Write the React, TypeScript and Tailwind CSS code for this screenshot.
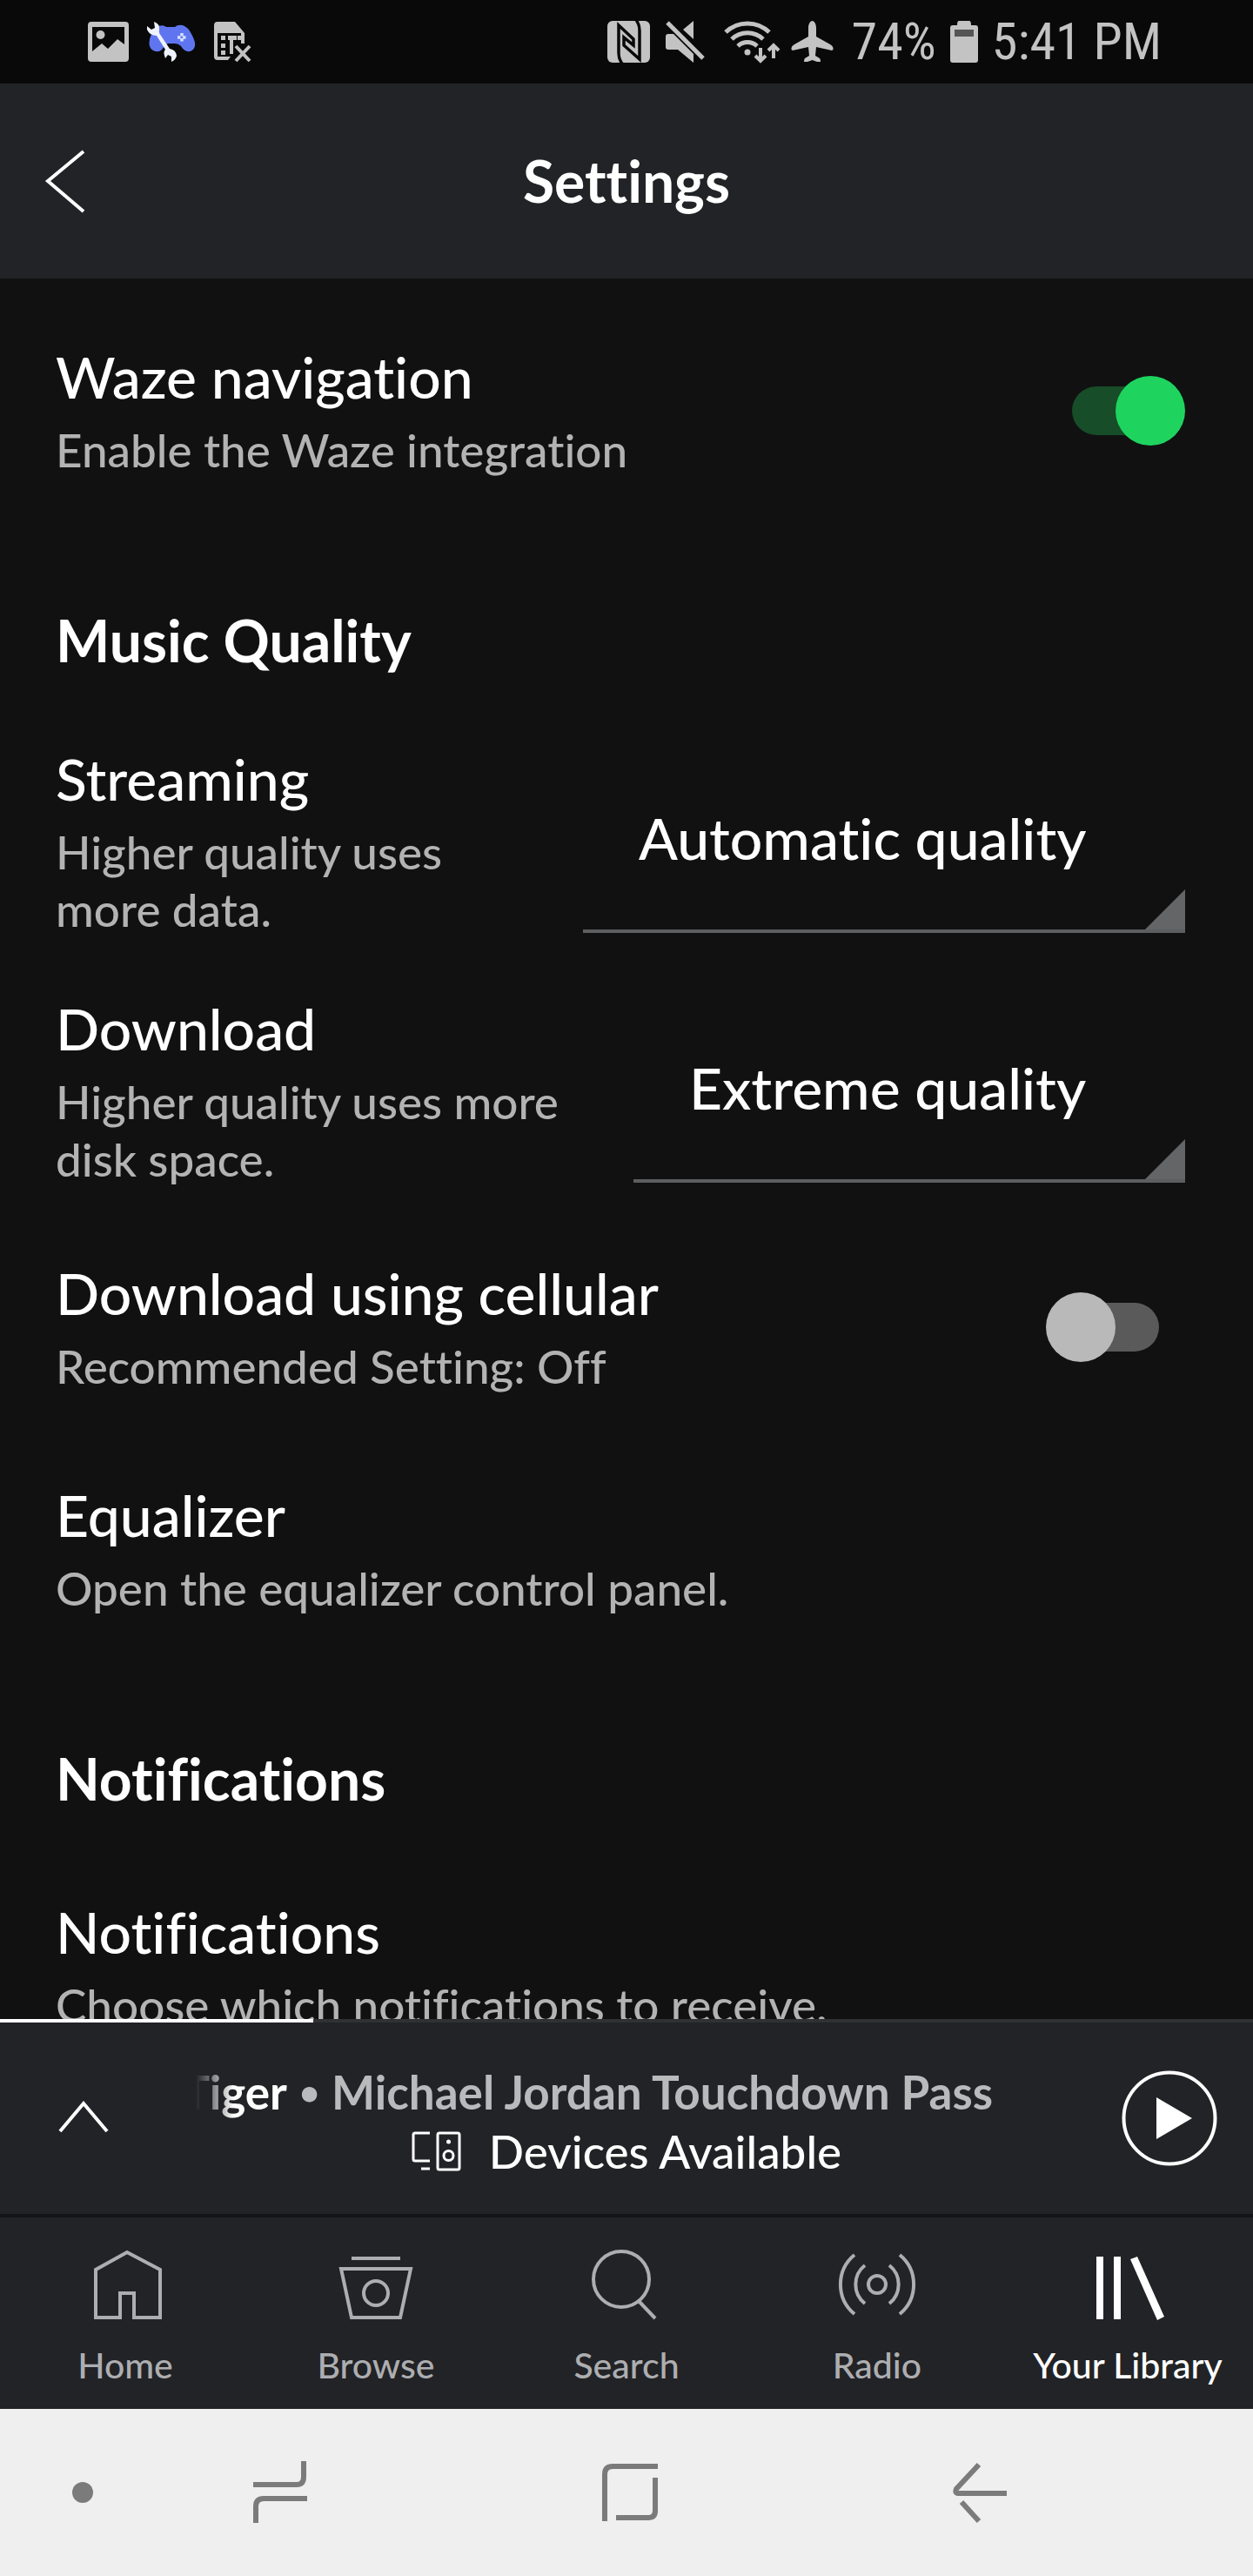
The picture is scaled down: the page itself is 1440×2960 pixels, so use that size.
import { ReactNode, useState } from 'react';

interface SettingTextProps { id: string; title: string; description: string; }

function SettingText({ id, title, description }: SettingTextProps) {
  return (
    <label htmlFor={id} className="flex min-w-0 flex-1 flex-col gap-[11px]">
      <span className="text-[66px] leading-[80px] text-white">{title}</span>
      <span className="text-[53px] leading-[66px] text-[#b3b3b3]">{description}</span>
    </label>
  );
}

function SectionTitle({ children }: { children: ReactNode }) {
  return <h2 className="pt-[97px] pb-[47px] text-[66px] leading-[80px] font-bold text-white">{children}</h2>;
}

function ToggleRow({ id, title, description, initial }: SettingTextProps & { initial: boolean }) {
  const [on, setOn] = useState(initial);
  return (
    <div className="flex items-center py-[49px]">
      <SettingText id={id} title={title} description={description} />
      <input
        id={id}
        type="checkbox"
        role="switch"
        checked={on}
        onChange={(e) => setOn(e.target.checked)}
        className="relative h-20 w-40 shrink-0 appearance-none before:absolute before:top-3 before:left-[30px] before:h-14 before:w-[100px] before:rounded-full before:bg-[#5a5a5a] after:absolute after:top-0 after:left-0 after:size-20 after:rounded-full after:bg-[#b9b9b9] checked:before:bg-[#174d28] checked:after:left-20 checked:after:bg-[#1ed45f]"
      />
    </div>
  );
}

function SelectRow({ id, title, description, options }: SettingTextProps & { options: string[] }) {
  return (
    <div className="flex items-center gap-12 py-8">
      <SettingText id={id} title={title} description={description} />
      <div className="relative shrink-0 border-b-4 border-[#5d5e60]">
        <select id={id} className="block h-[206px] appearance-none bg-transparent pr-[113px] pb-1 pl-16 text-[66px] text-white">
          {options.map((option) => <option key={option}>{option}</option>)}
        </select>
        <svg viewBox="0 0 46 46" className="pointer-events-none absolute right-0 bottom-0 size-[46px]" fill="#636567"><path d="M46 0V46H0Z" /></svg>
      </div>
    </div>
  );
}

function LinkRow({ title, description }: { title: string; description: string }) {
  return (
    <a href="#" className="flex flex-col gap-[11px] py-[49px]">
      <span className="text-[66px] leading-[80px] text-white">{title}</span>
      <span className="text-[53px] leading-[66px] text-[#b3b3b3]">{description}</span>
    </a>
  );
}

function StatusBar() {
  return (
    <div className="flex h-24 shrink-0 items-center justify-between bg-[#090909] pr-[105px] pl-[101px] font-['Roboto_Condensed',Roboto,sans-serif] text-[60px] leading-[72px] font-normal text-[#c3c3c3]">
      <div className="flex items-center gap-5">
        <svg viewBox="0 0 47 46" className="h-[46px] w-[47px]" fill="#c3c3c3">
          <path fillRule="evenodd" d="M4 0H43Q47 0 47 4V42Q47 46 43 46H4Q0 46 0 42V4Q0 0 4 0ZM5 6V34L16 25L23 31L34 20L42 26V6Z" />
          <circle cx="14.500" cy="15" r="5" />
        </svg>
        <svg viewBox="0 0 58 48" className="h-12 w-[58px]">
          <path d="M14 6Q20 4 23 7H33Q36 4 42 5Q48 7 52 15Q57 24 56 29Q54 36 47 35Q43 34 40 29Q37 26 33 26H25Q21 28 18 33Q14 37 8 34Q2 31 4 21Q7 10 14 6Z" fill="#5f75f0" />
          <path d="M41 14V24M36 19H46" stroke="#d5e0ff" strokeWidth="3.500" strokeDasharray="3.500 2.500" />
          <path d="M9 1Q16 3 15 11Q14 13 17 17L27 32Q34 33 35 40Q34 45 29 47L29 41L25 39L22 43Q19 35 22 33L12 17Q4 17 1 10V6L6 10L10 8Z" fill="#eef3ff" />
        </svg>
        <svg viewBox="0 0 44 48" className="h-12 w-11" fill="#c3c3c3">
          <path fillRule="evenodd" d="M4 1H24L35 14V26H31V14H4V41H19L16 45H4Q0 45 0 41V5Q0 1 4 1Z" />
          <path d="M8 17H13V22H8ZM16 17H26V22H22V38H18V22H16ZM27 17H31V22H27ZM8 26H13V31H8ZM8 34H13V39H8Z" />
          <path d="M25 29L41 46M41 29L25 46" stroke="#c3c3c3" strokeWidth="4" />
        </svg>
      </div>
      <div className="flex items-center gap-4">
        <svg viewBox="0 0 51 48" className="h-12 w-[51px]">
          <rect width="49" height="48" rx="6" fill="#c3c3c3" />
          <path d="M17 49Q13 44 13 37V5L30 21V28L19 19V28L37 44V11Q37 4 33 -1" fill="none" stroke="#090909" strokeWidth="3.500" />
        </svg>
        <svg viewBox="0 0 51 48" className="h-12 w-[51px]" fill="#c3c3c3">
          <path d="M20 10L32 0V21ZM3 15H9L32 38V48L14 33H3Q0 33 0 30V18Q0 15 3 15Z" />
          <path d="M2 2L43 43" stroke="#c3c3c3" strokeWidth="5" />
        </svg>
        <svg viewBox="0 0 61 48" className="h-12 w-[61px] overflow-visible" fill="none" stroke="#c3c3c3" strokeWidth="5">
          <path d="M2 13A36 36 0 0 1 52 13M9 21A26 26 0 0 1 45 21M16 29A16 16 0 0 1 38 29" />
          <circle cx="27" cy="36" r="3.500" fill="#c3c3c3" stroke="none" />
          <path d="M42 31V44M36 40L42 46L48 40M57 43V29M51 34L57 28L63 34" strokeWidth="4" />
        </svg>
        <svg viewBox="0 0 54 48" className="h-12 w-[54px]" fill="#c3c3c3">
          <path d="M24.500 0C27 0 29 4 29 8V18L45 27Q49 29 48.500 33L47 34L29 30L28 40L33 43Q34 44 34 47H30L24.500 45L19 47H15Q15 44 16 43L21 40L20 30L2 34L.5 33Q0 29 4 27L20 18V8C20 4 22 0 24.500 0Z" />
        </svg>
        <span>74%</span>
        <svg viewBox="0 0 32 48" className="h-12 w-8">
          <path d="M10 0H22Q24 0 24 5H29Q32 5 32 8V45Q32 48 29 48H3Q0 48 0 45V8Q0 5 3 5H8Q8 0 10 0Z" fill="#c3c3c3" />
          <path d="M5 10H27V18H5Z" fill="#555" />
        </svg>
        <span>5:41 PM</span>
      </div>
    </div>
  );
}

function NowPlaying() {
  return (
    <section className="shrink-0 border-b-4 border-[#131416] bg-[#222326]">
      <div className="h-1 bg-[#303133]"><div className="h-full w-1/4 bg-white" /></div>
      <div className="flex h-[220px] items-center">
        <button aria-label="Expand player" className="flex w-48 shrink-0 justify-center">
          <svg viewBox="0 0 60 40" className="h-10 w-[60px]" fill="none" stroke="#fff" strokeWidth="4"><path d="M3 35L30 3L57 35" /></svg>
        </button>
        <div className="min-w-0 flex-1 pt-2">
          <p className="mr-[107px] ml-[33px] flex justify-end gap-[14px] overflow-hidden text-[53px] leading-[68px] font-bold whitespace-nowrap text-[#b9babc] [mask-image:linear-gradient(to_right,transparent,black_44px)]">
            <span className="text-white">Tiger</span><span className="text-[40px]">•</span><span>Michael Jordan Touchdown Pass</span>
          </p>
          <button className="flex w-full items-center justify-center gap-8 text-[53px] leading-[68px] text-white">
            <svg viewBox="0 0 57 46" className="h-[46px] w-[57px]" fill="none" stroke="#fff" strokeWidth="3">
              <path d="M21 2H4Q2 2 2 4V32Q2 34 4 34H21M11 43H21" />
              <rect x="30" y="2" width="25" height="42" rx="2" />
              <circle cx="42.500" cy="28" r="5.500" />
              <circle cx="42.500" cy="12" r="2.500" fill="#fff" stroke="none" />
            </svg>
            Devices Available
          </button>
        </div>
        <button aria-label="Play" className="flex w-48 shrink-0 justify-center">
          <svg viewBox="0 0 110 110" className="size-[110px]"><circle cx="55" cy="55" r="52.500" fill="none" stroke="#fff" strokeWidth="4" /><path d="M40 31L81 55L40 79Z" fill="#fff" /></svg>
        </button>
      </div>
    </section>
  );
}

const tabs = [
  { label: 'Home', icon: <path d="M43 86H14V31L50 11L88 31V86H58V58H42V88" /> },
  { label: 'Browse', icon: <><path d="M20 18H76M8 30H88L76 86H20Z" /><circle cx="48" cy="58" r="14" /></> },
  { label: 'Search', icon: <><circle cx="42" cy="42" r="32" /><path d="M62 67L81 87" /></> },
  { label: 'Radio', icon: <><circle cx="48" cy="48" r="10" /><path d="M34 26A28 28 0 0 0 34 70M62 26A28 28 0 0 1 62 70M22 14A44 44 0 0 0 22 82M74 14A44 44 0 0 1 74 82" /></> },
  { label: 'Your Library', icon: <path d="M12 16H20V88H12ZM32 16H40V88H32ZM51 19L59 16L90 85L82 89Z" fill="#fff" stroke="none" />, active: true },
];

function TabBar() {
  return (
    <nav className="grid shrink-0 grid-cols-5 bg-[#222326] pt-[29px] pb-6">
      {tabs.map((tab) => (
        <a key={tab.label} href="#" className={tab.active ? 'flex flex-col items-center gap-[19px] text-white' : 'flex flex-col items-center gap-[19px] text-[#adaeb1]'}>
          <svg viewBox="0 0 96 96" className="size-24" fill="none" stroke="currentColor" strokeWidth="4">{tab.icon}</svg>
          <span className="text-[41px] leading-[52px] whitespace-nowrap">{tab.label}</span>
        </a>
      ))}
    </nav>
  );
}

function SystemBar() {
  return (
    <div className="grid h-48 shrink-0 grid-cols-[121fr_402fr_402fr_402fr_113fr] items-center justify-items-center bg-[#efefef] text-[#7b7b7b]">
      <button aria-label="Hide navigation bar" className="mr-[14px] size-6 justify-self-end rounded-full bg-[#7b7b7b]" />
      <button aria-label="Recent apps">
        <svg viewBox="0 0 62 72" className="h-[72px] w-[62px]" fill="none" stroke="currentColor" strokeWidth="6"><path d="M58 0V18Q58 27 50 27H0M62 43H12Q3 43 3 52V71" /></svg>
      </button>
      <button aria-label="Home screen">
        <svg viewBox="0 0 64 68" className="h-[68px] w-16" fill="none" stroke="currentColor" strokeWidth="6"><path d="M3 67V13Q3 4 12 4H64M61 17V55Q61 63 53 63H16" /></svg>
      </button>
      <button aria-label="Back">
        <svg viewBox="0 0 62 72" className="h-[72px] w-[62px]" fill="none" stroke="currentColor" strokeWidth="6"><path d="M30 4L4 32Q2 37 6 37H62M10 47L30 69" /></svg>
      </button>
    </div>
  );
}

export default function App() {
  return (
    <div className="flex h-screen flex-col overflow-hidden bg-[#111] font-[Lato,'Open_Sans',sans-serif] font-medium [font-variant-ligatures:none]">
      <StatusBar />
      <header className="grid h-56 shrink-0 grid-cols-[1fr_auto_1fr] items-center bg-[#222326] text-white">
        <button aria-label="Back to library" className="ml-[50px] justify-self-start">
          <svg viewBox="0 0 50 76" className="h-[76px] w-[50px]" fill="none" stroke="currentColor" strokeWidth="4"><path d="M46 4L5 38L46 73" /></svg>
        </button>
        <h1 className="text-[66px] leading-[80px] font-bold">Settings</h1>
      </header>
      <main className="min-h-0 flex-1 overflow-y-auto pt-6 pr-[78px] pl-16 [scrollbar-width:none]">
        <ToggleRow id="waze" title="Waze navigation" description="Enable the Waze integration" initial={true} />
        <SectionTitle>Music Quality</SectionTitle>
        <SelectRow id="streaming" title="Streaming" description="Higher quality uses more data." options={['Automatic quality', 'Normal quality', 'High quality', 'Extreme quality']} />
        <SelectRow id="download" title="Download" description="Higher quality uses more disk space." options={['Extreme quality', 'High quality', 'Normal quality']} />
        <ToggleRow id="cellular" title="Download using cellular" description="Recommended Setting: Off" initial={false} />
        <LinkRow title="Equalizer" description="Open the equalizer control panel." />
        <SectionTitle>Notifications</SectionTitle>
        <LinkRow title="Notifications" description="Choose which notifications to receive." />
      </main>
      <NowPlaying />
      <TabBar />
      <SystemBar />
    </div>
  );
}
